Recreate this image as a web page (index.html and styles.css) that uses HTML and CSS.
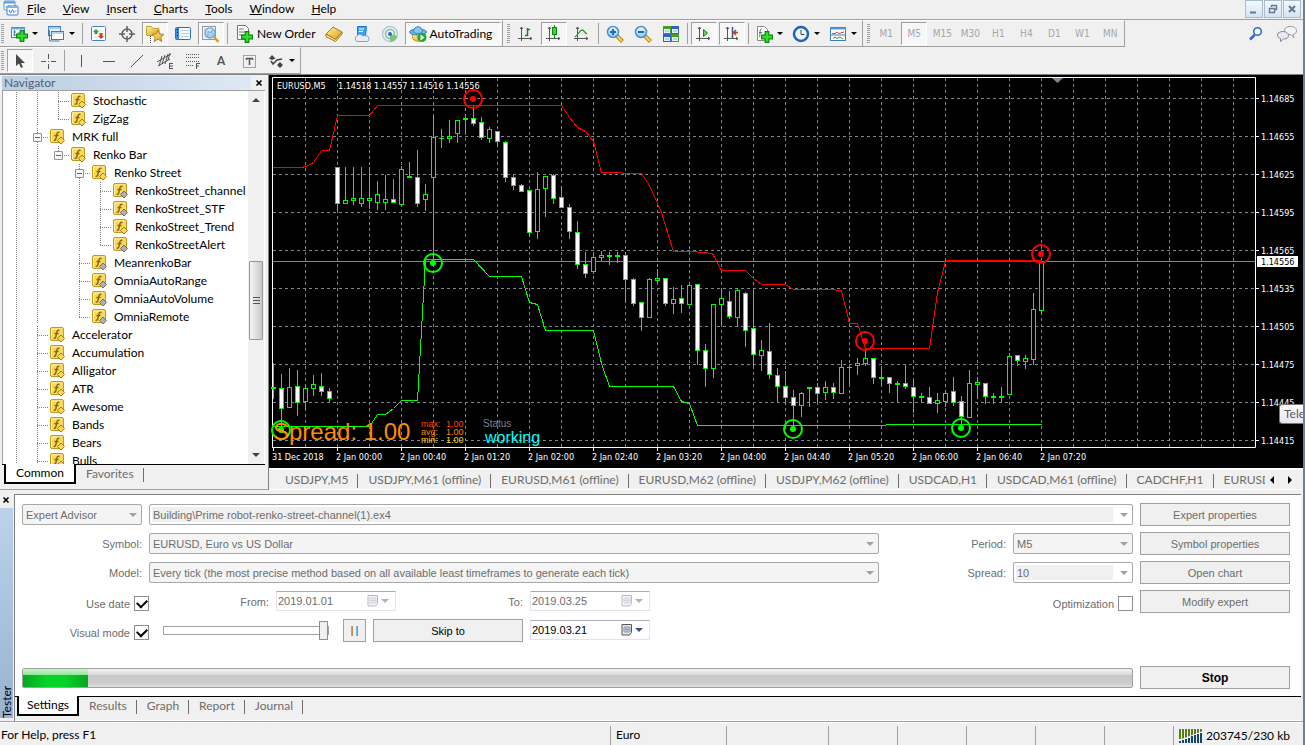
FILE: index.html
```html
<!DOCTYPE html>
<html lang="en">
<head>
    <meta charset="UTF-8">
    <meta name="viewport" content="width=device-width, initial-scale=1.0">
    <title>EURUSD,M5 - Strategy Tester</title>
    <link rel="stylesheet" href="styles.css">
</head>
<body>
    <svg width="0" height="0" class="defs">
        <defs>
            <linearGradient id="gold" x1="0" y1="0" x2="1" y2="1"><stop offset="0" stop-color="#fff3a0"/><stop offset="1" stop-color="#d99a10"/></linearGradient>
            <linearGradient id="lens" x1="0" y1="0" x2="0" y2="1"><stop offset="0" stop-color="#f2faff"/><stop offset="1" stop-color="#8cc4ee"/></linearGradient>
            <symbol id="axes" viewBox="0 0 18 18"><path d="M4.500 2v14M1 13.500h14M3 4l1.500-2 1.500 2M13 12l2 1.500-2 1.500" fill="none" stroke="#555"/></symbol>
            <symbol id="plus" viewBox="0 0 10 10"><path d="M3.500.500h3v3h3v3h-3v3h-3v-3h-3v-3h3z" fill="#2fe02f" stroke="#0a8a0a"/></symbol>
            <symbol id="func" viewBox="0 0 16 16">
                <rect x=".5" y=".5" width="13" height="13" rx="1.500" fill="#f5d95c" stroke="#c49a1c"/>
                <path d="M1.500 12V2h10" fill="none" stroke="#fdf0a8"/>
                <path d="M9.500 3.500c-2-.8-2.500.5-3 3l-.6 3c-.3 1.500-1 2-2.200 1.500M4.500 6.500h4" fill="none" stroke="#8a6410" stroke-width="1.400"/>
                <path d="M11 8l3.500 3.500L11 15l-3.500-3.500z" fill="var(--dot)" stroke="var(--dot-edge)"/>
            </symbol>
            <symbol id="calendar" viewBox="0 0 12 12"><path d="M1 .5h9.500v8l-2 2.500H1z" fill="#e4e8ee" stroke="#5a5257"/><path d="M3 3h6v5H3zM3 5.500h6M5 3v5M7 3v5" fill="none" stroke="#8d9bb0"/></symbol>
        </defs>
    </svg>

    <header class="menubar">
        <svg class="logo" width="16" height="16" viewBox="0 0 16 16"><rect x="1" y="1" width="11" height="9" rx="1" fill="#fff" stroke="#5b9bd8"/><path d="M1 2.500h11" stroke="#5b9bd8" stroke-width="2"/><path d="M2.500 6l1.500 2 1.500-3" fill="none" stroke="#5b9bd8"/><rect x="4" y="6" width="11" height="9" rx="1" fill="#fff" stroke="#3f7fd0"/><path d="M4 7h11" stroke="#7db4e8" stroke-width="2"/><path d="M6 10l1.500 3 2-3.500 1.500 3 2-2" fill="none" stroke="#3f7fd0"/></svg>
        <nav class="menu">
            <button><u>F</u>ile</button>
            <button><u>V</u>iew</button>
            <button><u>I</u>nsert</button>
            <button><u>C</u>harts</button>
            <button><u>T</u>ools</button>
            <button><u>W</u>indow</button>
            <button><u>H</u>elp</button>
        </nav>
        <div class="win-buttons">
            <button aria-label="Minimize"><svg width="16" height="16"><path d="M4 11.500h6" stroke="#66788c" stroke-width="2"/></svg></button>
            <button aria-label="Restore"><svg width="16" height="16"><path d="M6.500 6V4.500h5v4H10M6 4.500h6M4.500 7.500h5v4h-5zM4 7.500h6" fill="none" stroke="#66788c" stroke-width="1.400"/></svg></button>
            <button aria-label="Close"><svg width="16" height="16"><path d="M5 5l6 6M11 5l-6 6" stroke="#66788c" stroke-width="2.200"/></svg></button>
        </div>
    </header>

    <div class="toolrow">
        <div class="toolbar">
            <i class="grip"></i>
            <button class="tool drop" aria-label="New chart"><svg width="18" height="18"><rect x="1.500" y="2.500" width="13" height="10" fill="#fff" stroke="#3d7cb8"/><path d="M1 3.500h14" stroke="#6ba7dc" stroke-width="2"/><path d="M4.500 5v6M3 7h3M3 10h3M7.500 8h3" stroke="#4a7fb5" fill="none"/><use href="#plus" x="6" y="5" width="12" height="12"/></svg></button>
            <button class="tool drop" aria-label="Profiles"><svg width="18" height="18"><rect x="1.500" y="1.500" width="12" height="9" fill="#e9f3fc" stroke="#3d7cb8"/><path d="M1 3h13" stroke="#6ba7dc"/><rect x="4.500" y="6.500" width="12" height="8" fill="#fff" stroke="#3d7cb8"/><path d="M4 8h13" stroke="#6ba7dc"/><path d="M2.500 5v11h10" fill="none" stroke="#4a7fb5"/></svg></button>
            <i class="sep"></i>
            <button class="tool" aria-label="Market Watch"><svg width="18" height="18"><rect x="1.500" y="1.500" width="14" height="14" rx="1" fill="#fff" stroke="#3d85c6"/><path d="M3 6h11M3 9h11M3 12h11" stroke="#dde7ee"/><path d="M6 4l3 3H7.500v2h-3V7H3z" fill="#27a52b"/><path d="M11 14l-3-3h1.500V8h3v3H14z" fill="#e03c14"/></svg></button>
            <button class="tool" aria-label="Data Window"><svg width="18" height="18"><circle cx="9" cy="9" r="5" fill="none" stroke="#606060" stroke-width="1.500"/><path d="M9 1v6M9 11v6M1 9h6M11 9h6" stroke="#606060" stroke-width="1.500"/></svg></button>
            <button class="tool pressed" aria-label="Navigator"><svg width="20" height="18"><path d="M1.500 10.500v-9h5l1.500 2h6v7z" fill="url(#gold)" stroke="#c9a227"/><path d="M5.500 11v7" stroke="#444" stroke-dasharray="1 1"/><path d="M13 5l1.800 4 4.200.4-3.200 2.800 1 4.300-3.800-2.300-3.800 2.300 1-4.300L7 9.400l4.200-.4z" fill="url(#gold)" stroke="#b88514"/></svg></button>
            <button class="tool" aria-label="Terminal"><svg width="18" height="18"><rect x="1.500" y="2.500" width="15" height="12" rx="1" fill="#f4faff" stroke="#2d6db3"/><rect x="2" y="3" width="3" height="11" fill="#3d8be0"/><path d="M3.500 4v9" stroke="#111" stroke-dasharray="1 2"/><path d="M7 5.500h8M7 8.500h8M7 11.500h8" stroke="#b8cde6"/></svg></button>
            <button class="tool pressed" aria-label="Strategy Tester"><svg width="20" height="18"><rect x="1.500" y="1.500" width="13" height="13" fill="#f7f7f7" stroke="#999"/><path d="M4 3v10M8 3v10M12 3v10" stroke="#c4cbd2"/><circle cx="9" cy="8" r="5" fill="url(#lens)" stroke="#6fa8dc" stroke-width="1.500"/><path d="M7 11V6l2 2 2-3v5" stroke="#7fa8cf" fill="none"/><path d="M13 12l4.500 5" stroke="#d5a021" stroke-width="2.500"/></svg></button>
            <i class="sep"></i>
            <button class="tool wide order"><svg width="18" height="20"><path d="M1.500 1.500h8l3 3v11h-11z" fill="#fff" stroke="#777"/><path d="M3 5h5M3 8h7M3 11h5" stroke="#777"/><use href="#plus" x="5" y="7" width="12" height="12"/></svg>New Order</button>
            <button class="tool" aria-label="Library"><svg width="18" height="18"><path d="M1 9l7-7 9 5-6 8z" fill="url(#gold)" stroke="#b07d10"/><path d="M1 9v2.500l9.500 5L17 9V7l-6.500 7.500z" fill="#fff0c0" stroke="#a87008"/></svg></button>
            <button class="tool" aria-label="MetaEditor"><svg width="18" height="18"><path d="M4.500 1.500h9l-1 9h-8z" fill="#3ba3f0" stroke="#1c7bd0"/><path d="M6 4h5M6 6.500h4" stroke="#fff"/><path d="M4 16.500a3 3 0 0 1 0-5.500c2-3 5-1 6 0 3-1 6 0 6 2.500s-1 3-3 3z" fill="#e8eef8" stroke="#8a9cc0"/></svg></button>
            <button class="tool" aria-label="Signals"><svg width="18" height="18"><circle cx="9" cy="9" r="7.500" fill="#e8f0f4" stroke="#b4c9dc" stroke-width="1.500"/><circle cx="9" cy="9" r="4.500" fill="none" stroke="#8fbaa6" stroke-width="1.500"/><path d="M9 9v8c4 0 7-3 7-6" fill="#7cc47c"/><circle cx="9" cy="9" r="2" fill="#2a6fb8"/></svg></button>
            <button class="tool wide pressed"><svg width="18" height="18"><path d="M3 9l1 5c2 3 8 3 11 0l1-5z" fill="url(#gold)" stroke="#c49420"/><ellipse cx="9" cy="7" rx="8.500" ry="3" fill="#6db5e4" stroke="#3b86bd"/><path d="M4.500 7c0-7 9-7 9 0-3 2-6 2-9 0z" fill="#83c6ee" stroke="#3b86bd"/><circle cx="13" cy="12.500" r="4.500" fill="#1fa82b"/><path d="M11.500 9.500v6l4-3z" fill="#fff"/></svg>AutoTrading</button>
        </div>
        <div class="toolbar">
            <i class="grip"></i>
            <button class="tool" aria-label="Bar chart"><svg width="18" height="18"><use href="#axes" width="18" height="18"/><path d="M10.500 3v8M8 10.500h2.500M10.500 4.500H13" stroke="#118a11" stroke-width="1.500" fill="none"/></svg></button>
            <button class="tool pressed" aria-label="Candlesticks"><svg width="18" height="18"><use href="#axes" width="18" height="18"/><path d="M9.500 0v13" stroke="#0a8a0a"/><rect x="7.500" y="2.500" width="4" height="7" fill="#2ee02e" stroke="#0a8a0a"/></svg></button>
            <button class="tool" aria-label="Line chart"><svg width="18" height="18"><use href="#axes" width="18" height="18"/><path d="M2 12c4-3 5-7 7-7s3 3 5 4" stroke="#2a9a3a" fill="none" stroke-width="1.300"/></svg></button>
            <i class="sep"></i>
            <button class="tool" aria-label="Zoom in"><svg width="18" height="18"><path d="M10.500 10.500l6 6" stroke="#b88514" stroke-width="4"/><path d="M11 11l5 5" stroke="#f6d95a" stroke-width="2"/><circle cx="7" cy="7" r="5.500" fill="url(#lens)" stroke="#4a90d0" stroke-width="1.500"/><path d="M4 7h6M7 4v6" stroke="#1f6cb0" stroke-width="2"/></svg></button>
            <button class="tool" aria-label="Zoom out"><svg width="18" height="18"><path d="M10.500 10.500l6 6" stroke="#b88514" stroke-width="4"/><path d="M11 11l5 5" stroke="#f6d95a" stroke-width="2"/><circle cx="7" cy="7" r="5.500" fill="url(#lens)" stroke="#4a90d0" stroke-width="1.500"/><path d="M4 7h6" stroke="#1f6cb0" stroke-width="2"/></svg></button>
            <button class="tool" aria-label="Tile windows"><svg width="18" height="18"><path d="M1 1h8v8H1zM9 9h8v8H9z" fill="#45a02a"/><path d="M9 1h8v8H9zM1 9h8v8H1z" fill="#2d63c8"/><path d="M2 4h6v4H2zM10 4h6v4h-6zM2 12h6v4H2zM10 12h6v4h-6z" fill="#e6f0fa"/><path d="M3 6h4M11 6h4M3 14h4M11 14h4" stroke="#9fb8a8"/></svg></button>
            <i class="sep"></i>
            <button class="tool pressed" aria-label="Auto scroll"><svg width="18" height="18"><use href="#axes" width="18" height="18"/><path d="M8.500 4.500v7l4-3.500z" fill="#5fd65f" stroke="#0a8a0a"/></svg></button>
            <button class="tool pressed" aria-label="Chart shift"><svg width="18" height="18"><use href="#axes" width="18" height="18"/><path d="M9.500 2v11" stroke="#1f5fa0" stroke-width="1.500"/><path d="M10 7.500h5M13 5l-2.500 2.500L13 10" stroke="#c03a10" fill="none" stroke-width="1.500"/></svg></button>
            <i class="sep"></i>
            <button class="tool drop" aria-label="Indicators"><svg width="18" height="18"><path d="M2.500 1.500h7l3 3v11h-10z" fill="#fff" stroke="#888"/><path d="M6.500 4c-2 0-1 4-2 8M4 7.500h3" fill="none" stroke="#666"/><use href="#plus" x="6" y="6" width="12" height="12"/></svg></button>
            <button class="tool drop" aria-label="Periods"><svg width="18" height="18"><circle cx="9" cy="9" r="7" fill="#eef6fd" stroke="#1e66b4" stroke-width="2.500"/><path d="M9 5v4.500h3.500" stroke="#444" fill="none"/></svg></button>
            <button class="tool drop" aria-label="Templates"><svg width="18" height="18"><rect x="1.500" y="2.500" width="15" height="13" fill="#fff" stroke="#3d7cb8"/><path d="M1 3.500h16" stroke="#4e9be0" stroke-width="2"/><path d="M3 8.500h3l2-1.500 2 1.500 5-1.500" stroke="#c0503a" fill="none"/><path d="M1 10h16" stroke="#3d7cb8"/><path d="M4 13.500l2-1.500 2 1.500 3-1.500 3 2" stroke="#2a9a3a" fill="none"/></svg></button>
        </div>
        <div class="toolbar periods">
            <i class="grip"></i>
            <button class="tool" disabled>M1</button>
            <button class="tool pressed" disabled>M5</button>
            <button class="tool" disabled>M15</button>
            <button class="tool" disabled>M30</button>
            <button class="tool" disabled>H1</button>
            <button class="tool" disabled>H4</button>
            <button class="tool" disabled>D1</button>
            <button class="tool" disabled>W1</button>
            <button class="tool" disabled>MN</button>
        </div>
        <div class="corner">
            <button aria-label="Search"><svg width="16" height="16"><path d="M6.500 9L2 13.500" stroke="#2f66d8" stroke-width="2.500"/><circle cx="9.500" cy="5.500" r="3.800" fill="#fff" stroke="#2f66d8" stroke-width="1.600"/></svg></button>
            <button aria-label="Chat"><svg width="22" height="18"><path d="M14 1.500c4 0 6.500 1.500 6.500 4s-1.500 3.500-3.500 4l1 3-3.500-3C10 9.500 8.500 8 8.500 5.500s2-4 5.500-4z" fill="#f4f4f4" stroke="#999"/><path d="M7 6.500c3 0 5.500 1.500 5.500 4s-2 3.500-5 3.500l-3 2.500v-3c-2-.5-3-1.500-3-3.500S4 6.500 7 6.500z" fill="#e8e8f2" stroke="#888"/></svg></button>
        </div>
    </div>

    <div class="toolrow">
        <div class="toolbar">
            <i class="grip"></i>
            <button class="tool pressed" aria-label="Cursor"><svg width="18" height="18"><path d="M5 2v12l3-2.500 2 4.500 2-1-2-4h4z" fill="#4a4a4a"/></svg></button>
            <button class="tool" aria-label="Crosshair"><svg width="18" height="18"><path d="M9.500 2v5M9.500 12v5M2 9.500h5M12 9.500h5M9 9.500h1" stroke="#555"/></svg></button>
            <i class="sep"></i>
            <button class="tool" aria-label="Vertical line"><svg width="18" height="18"><path d="M9.500 3v12" stroke="#555"/></svg></button>
            <button class="tool" aria-label="Horizontal line"><svg width="18" height="18"><path d="M3 9.500h12" stroke="#555"/></svg></button>
            <button class="tool" aria-label="Trendline"><svg width="18" height="18"><path d="M3 15L15 3" stroke="#555"/></svg></button>
            <button class="tool" aria-label="Equidistant channel"><svg width="18" height="18"><path d="M1 10L15 2M2 14l12-7M6 4L3 14M9 3L6 12M12 2L9 12M14 1l-2 7M13.500 11v6M17 11.500h-3.500M17 14h-3.500M17 16.500h-3.500" stroke="#555" fill="none"/></svg></button>
            <button class="tool" aria-label="Fibonacci"><svg width="18" height="18"><path d="M2 2.500h13M2 5.500h13M2 9.500h13M2 13.500h8" stroke="#555" stroke-dasharray="1 1"/><path d="M12.500 17v-5.500H16M12.500 14H15" stroke="#555" fill="none"/></svg></button>
            <button class="tool glyph">A</button>
            <button class="tool" aria-label="Text label"><svg width="18" height="18"><rect x="3.500" y="3.500" width="12" height="12" fill="none" stroke="#555" stroke-dasharray="1 1"/><path d="M6 6.500h7M9.500 6v7M6.500 6v2M12.500 6v2" stroke="#555" stroke-width="1.500"/></svg></button>
            <button class="tool drop" aria-label="Arrows"><svg width="18" height="18"><path d="M5 3l3.500 3.500L5 8 2 6.500zM13 10l3 3-3 3-3-3z" fill="#444"/><path d="M4 9l2 3 4-4 5-1" stroke="#444" fill="none" stroke-width="1.500"/></svg></button>
        </div>
    </div>

    <main class="workspace">
        <section class="navigator">
            <div class="nav-title"><h2>Navigator</h2><button aria-label="Close navigator"><svg width="8" height="8"><path d="M1.500 1.500l5 5M6.500 1.500l-5 5" stroke="#000" stroke-width="1.600"/></svg></button></div>
            <div class="tree-box">
                <ul class="tree" id="tree"></ul>
                <div class="scrollbar">
                    <i class="arrow up"></i>
                    <div class="track"><div class="thumb"><i></i><i></i><i></i></div></div>
                    <i class="arrow down"></i>
                </div>
            </div>
            <div class="tabs">
                <button class="tab active">Common</button>
                <button class="tab">Favorites</button>
            </div>
        </section>

        <section class="charts">
            <svg class="chart" id="chart"></svg>
            <div class="chart-tabs">
                <div class="tab-list">
                    <button class="tab">USDJPY,M5</button>
                    <button class="tab">USDJPY,M61 (offline)</button>
                    <button class="tab">EURUSD,M61 (offline)</button>
                    <button class="tab">EURUSD,M62 (offline)</button>
                    <button class="tab">USDJPY,M62 (offline)</button>
                    <button class="tab">USDCAD,H1</button>
                    <button class="tab">USDCAD,M61 (offline)</button>
                    <button class="tab">CADCHF,H1</button>
                    <button class="tab">EURUSD,</button>
                </div>
                <button class="scroll" aria-label="Scroll left"><svg width="6" height="8"><path d="M5 0v8L1 4z"/></svg></button>
                <button class="scroll" aria-label="Scroll right"><svg width="6" height="8"><path d="M1 0v8l4-4z"/></svg></button>
            </div>
            <div class="tooltip">Tele</div>
        </section>
    </main>

    <section class="tester">
        <div class="tester-side">
            <button aria-label="Close tester"><svg width="8" height="8"><path d="M1.500 1.500l5 5M6.500 1.500l-5 5" stroke="#000" stroke-width="1.600"/></svg></button>
            <h2>Tester</h2>
        </div>
        <div class="tester-body">
            <form class="settings">
                <div class="first"><span class="select"><select aria-label="Program type" disabled><option>Expert Advisor</option></select></span></div>
                <div class="line"><span class="combo"><input type="text" aria-label="Expert" value="Building\Prime robot-renko-street-channel(1).ex4" disabled></span></div>
                <button type="button" class="btn" disabled>Expert properties</button>

                <label class="first" for="symbol">Symbol:</label>
                <div class="line">
                    <span class="select"><select id="symbol" disabled><option>EURUSD, Euro vs US Dollar</option></select></span>
                    <label class="side" for="period">Period:</label>
                    <span class="select short"><select id="period" disabled><option>M5</option></select></span>
                </div>
                <button type="button" class="btn" disabled>Symbol properties</button>

                <label class="first" for="model">Model:</label>
                <div class="line">
                    <span class="select"><select id="model" disabled><option>Every tick (the most precise method based on all available least timeframes to generate each tick)</option></select></span>
                    <label class="side" for="spread">Spread:</label>
                    <span class="combo short"><input type="text" id="spread" value="10" disabled></span>
                </div>
                <button type="button" class="btn" disabled>Open chart</button>

                <label class="check">Use date <input type="checkbox" checked></label>
                <div class="line">
                    <label class="from" for="from">From:</label>
                    <span class="date off"><input type="text" id="from" value="2019.01.01" disabled><svg width="12" height="12"><use href="#calendar"/></svg></span>
                    <label class="to" for="to">To:</label>
                    <span class="date off"><input type="text" id="to" value="2019.03.25" disabled><svg width="12" height="12"><use href="#calendar"/></svg></span>
                    <label class="check end">Optimization <input type="checkbox"></label>
                </div>
                <button type="button" class="btn" disabled>Modify expert</button>

                <label class="check">Visual mode <input type="checkbox" checked></label>
                <div class="line visual">
                    <input type="range" class="speed" aria-label="Speed" min="1" max="32" value="32">
                    <button type="button" class="btn pause" aria-label="Pause"><i></i><i></i></button>
                    <button type="button" class="btn skip">Skip to</button>
                    <span class="date"><input type="text" aria-label="Skip to date" value="2019.03.21"><svg width="12" height="12"><use href="#calendar"/></svg></span>
                </div>
            </form>
            <div class="run">
                <div class="progress" role="progressbar" aria-valuenow="5.9"><div class="bar" style="width: 5.9%"></div></div>
                <button class="btn stop">Stop</button>
            </div>
            <div class="tabs">
                <button class="tab active">Settings</button>
                <button class="tab">Results</button>
                <button class="tab">Graph</button>
                <button class="tab">Report</button>
                <button class="tab">Journal</button>
            </div>
        </div>
    </section>

    <footer class="status">
        <span class="help">For Help, press F1</span>
        <span class="profile">Euro</span>
        <span class="time"></span>
        <span></span>
        <span></span>
        <span></span>
        <span></span>
        <span></span>
        <span class="traffic"><svg width="24" height="14"><path d="M0 5h24" stroke="#5b7a1a" stroke-width="10" stroke-dasharray="2 1"/><path d="M0 14V11L24 2v12z" fill="#f0f0f0"/><path d="M0 12h2v2H0zM3 11h2v3H3zM6 10h2v4H6zM9 9h2v5H9zM12 7h2v7h-2zM15 6h2v8h-2zM18 5h2v9h-2zM21 4h2v10h-2z" fill="#12466b"/></svg>203745/230 kb</span>
    </footer>

    <script src="script.js"></script>
</body>
</html>
```
FILE: styles.css
```css
* {
    box-sizing: border-box;
}

body {
    margin: 0;
    background-color: #f0f0f0;
    border-right: 2px solid #6e7f94;
    color: #000;
    font-family: Lato, "Noto Sans", sans-serif;
    font-size: 12px;
    line-height: 16px;
    overflow: hidden;
}

button, input, select {
    font: inherit;
    color: inherit;
    margin: 0;
    padding: 0;
    border: 0;
    background: none;
}

svg {
    display: block;
    flex: none;
}

.defs {
    position: absolute;
}

h2 {
    margin: 0;
    font-size: 12px;
    font-weight: normal;
}

/* Menu */
.menubar {
    display: flex;
    height: 20px;
    padding-left: 3px;
    border-bottom: 1px solid #a0a0a0;
}

.menu {
    display: flex;
    gap: 17px;
    flex: 1;
    padding: 0 0 2px 8px;
}

.win-buttons {
    display: flex;
    gap: 1px;
    padding-right: 2px;
}

.win-buttons button {
    height: 18px;
    border: 1px solid #a9bccf;
    background: linear-gradient(#f4f9fe, #d3e4f5);
}

/* Toolbars */
.toolrow {
    display: flex;
    height: 27px;
}

.toolbar {
    display: flex;
    align-items: center;
    padding-left: 1px;
    border-top: 1px solid #fff;
    border-right: 1px solid #a0a0a0;
    border-bottom: 1px solid #a0a0a0;
}

.toolbar + .toolbar {
    padding-left: 4px;
}

.grip {
    width: 3px;
    height: 19px;
    margin-right: 2px;
    background: repeating-linear-gradient(#a0a0a0 0 1px, #f0f0f0 1px 2px);
}

.sep {
    width: 1px;
    height: 21px;
    margin: 0 2px;
    background-color: #a0a0a0;
}

.tool {
    display: flex;
    align-items: center;
    justify-content: center;
    width: 26px;
    height: 23px;
    margin: 0 1px;
}

.tool.pressed {
    border: 1px solid #a0a0a0;
    border-right-color: #fff;
    border-bottom-color: #fff;
    background-color: #f7f7f7;
}

.tool.wide {
    width: auto;
    gap: 3px;
    padding: 0 8px 0 3px;
}

.tool.order {
    padding: 0 3px 0 5px;
}

.tool.drop {
    width: 35px;
    gap: 4px;
    padding-right: 2px;
}

.tool.drop::after {
    content: "";
    border: 3px solid transparent;
    border-top-color: #000;
    border-bottom: 0;
}

.tool.glyph {
    color: #555;
    font-family: Roboto, sans-serif;
    font-weight: 500;
    font-size: 13px;
}

.periods .tool {
    color: #a6a6a6;
    font-family: "DejaVu Sans Condensed", sans-serif;
    font-size: 10px;
}

.corner {
    display: flex;
    align-items: center;
    gap: 12px;
    margin-left: auto;
    padding-right: 5px;
}

/* Navigator */
.workspace {
    display: flex;
    height: 416px;
    border-top: 1px solid #808080;
}

.navigator {
    display: flex;
    flex-direction: column;
    width: 269px;
    padding: 0 3px 0 2px;
    border-right: 1px solid #808080;
    border-bottom: 1px solid #a0a0a0;
}

.nav-title {
    display: flex;
    align-items: center;
    justify-content: space-between;
    height: 15px;
    padding-right: 2px;
}

.nav-title h2 {
    flex: 1;
    margin-right: 4px;
    padding-left: 2px;
    background: linear-gradient(90deg, #bacde2, #dfe9f5);
    color: #4d5e74;
    line-height: 14px;
}

.tree-box {
    display: flex;
    height: 374px;
    border-top: 1px solid #a0a0a0;
    border-left: 1px solid #a0a0a0;
    background-color: #fff;
    overflow: hidden;
}

.tree {
    flex: 1;
    min-width: 0;
    margin: 0;
    padding: 1px 0 0 3px;
    list-style: none;
}

.tree li {
    display: flex;
    align-items: center;
    height: 18px;
    white-space: nowrap;
}

.tree svg {
    --dot: #f5d95c;
    --dot-edge: #a87a10;
    margin: 0 7px 0 2px;
}

.tree svg.plain {
    --dot: #b0b0b0;
    --dot-edge: #707070;
}

.guide {
    position: relative;
    width: 21px;
    height: 18px;
}

.guide::before {
    content: "";
    position: absolute;
    left: 10px;
    top: 0;
    width: 1px;
    height: 18px;
    background: repeating-linear-gradient(#808080 0 1px, transparent 1px 2px);
}

.guide::after {
    content: "";
    position: absolute;
    left: 10px;
    top: 9px;
    width: 11px;
    height: 1px;
    background: repeating-linear-gradient(90deg, #808080 0 1px, transparent 1px 2px);
}

.guide.none::before, .guide.none::after, .guide.line::after {
    display: none;
}

.guide.last::before {
    height: 9px;
}

.box {
    position: absolute;
    z-index: 1;
    left: 6px;
    top: 5px;
    width: 9px;
    height: 9px;
    border: 1px solid #919191;
    border-radius: 1px;
    background: linear-gradient(#4b63a7, #4b63a7) center / 5px 1px no-repeat #f6f6f6;
}

.scrollbar {
    display: flex;
    flex: none;
    flex-direction: column;
    align-items: center;
    width: 16px;
    margin-right: 1px;
    background-color: #f0f0f0;
}

.arrow {
    margin: 7px 0;
    border: 4px solid transparent;
}

.arrow.up {
    border-top: 0;
    border-bottom-color: #444;
}

.arrow.down {
    border-bottom: 0;
    border-top-color: #444;
}

.track {
    flex: 1;
    width: 14px;
    padding-top: 152px;
}

.thumb {
    display: flex;
    flex-direction: column;
    align-items: center;
    justify-content: center;
    gap: 2px;
    height: 79px;
    border: 1px solid #979797;
    border-radius: 1px;
    background: linear-gradient(90deg, #f5f5f5, #c9c9cd);
}

.thumb i {
    width: 7px;
    height: 1px;
    background-color: #555;
}

/* Tabs */
.tabs {
    display: flex;
    align-items: flex-start;
    height: 24px;
    padding-left: 2px;
    border-top: 1px solid #000;
}

.tab {
    position: relative;
    padding: 1px 10px;
    color: #6d6d6d;
    white-space: nowrap;
}

.tab:not(.active)::after {
    content: "";
    position: absolute;
    right: 0;
    top: 3px;
    width: 1px;
    height: 14px;
    background-color: #6d6d6d;
}

.tab.active {
    height: 20px;
    margin-top: -1px;
    padding: 0 8px;
    border: solid #000;
    border-width: 0 2px 2px;
    background-color: #fff;
    color: #000;
}

.navigator .tab.active {
    padding: 0 10px;
}

/* Chart */
.charts {
    position: relative;
    flex: 1;
    min-width: 0;
    padding: 1px 2px 0 1px;
    background-color: #000;
}

.chart {
    width: 100%;
    height: 392px;
    font-family: "DejaVu Sans Condensed", sans-serif;
    font-size: 9px;
}

.chart text {
    fill: #fff;
}

.chart .hud {
    font-family: "Liberation Sans", Arial, sans-serif;
}

.chart-tabs {
    display: flex;
    align-items: center;
    height: 22px;
    margin: 0 -2px 0 -1px;
    padding: 0 2px 0 6px;
    border-top: 2px solid #fff;
    border-bottom: 1px solid #fff;
    background-color: #f0f0f0;
}

.tab-list {
    display: flex;
    flex: 1;
    overflow: hidden;
}

.scroll {
    width: 18px;
    padding-left: 4px;
}

.tooltip {
    position: absolute;
    top: 329px;
    right: -2px;
    width: 26px;
    height: 20px;
    padding: 1px 0 1px 4px;
    border: 1px solid #767676;
    border-right: 0;
    border-radius: 3px 0 0 3px;
    background: linear-gradient(#fff, #e4e5f0);
    color: #575757;
}

/* Tester */
.tester {
    display: flex;
    height: 232px;
    padding-top: 4px;
    border-bottom: 1px solid #a0a0a0;
}

.tester-side {
    display: flex;
    flex-direction: column;
    width: 14px;
    padding: 2px 1px 3px 0;
}

.tester-side button {
    padding: 0 0 4px 2px;
}

.tester-side h2 {
    flex: 1;
    background: linear-gradient(#98b2d0, #bcd2ec);
    line-height: 13px;
    writing-mode: vertical-rl;
    transform: rotate(180deg);
}

.tester-body {
    flex: 1;
    min-width: 0;
    margin-right: 2px;
    border-top: 1px solid #808080;
    border-left: 1px solid #808080;
    background-color: #fff;
    color: #6d6d6d;
    font-family: "Liberation Sans", Arial, sans-serif;
    font-size: 11px;
}

.tester-body .tabs {
    background-color: #f0f0f0;
    font-family: Lato, "Noto Sans", sans-serif;
    font-size: 12px;
}

.settings {
    display: grid;
    grid-template-columns: 127px 1fr 150px;
    row-gap: 6px;
    padding: 8px 11px 0 7px;
}

.settings .first, .line, .check {
    display: flex;
    align-items: center;
    height: 23px;
}

.settings .first {
    justify-content: flex-end;
    padding-right: 7px;
}

.line {
    padding-right: 7px;
}

.settings .check {
    justify-content: flex-end;
    gap: 4px;
    padding-top: 4px;
    white-space: nowrap;
}

.check.end {
    margin-left: auto;
}

.check input {
    appearance: none;
    display: grid;
    place-items: center;
    width: 15px;
    height: 15px;
    border: 1px solid #8e8f8f;
    background-color: #fff;
}

.check input:checked::before {
    content: "";
    width: 8px;
    height: 5px;
    margin-bottom: 3px;
    border: solid #000;
    border-width: 0 0 2px 2px;
    transform: rotate(-45deg);
}

.select, .combo {
    display: flex;
    position: relative;
    flex: 1;
    align-items: center;
    height: 21px;
    border: 1px solid #a8a8a8;
    border-radius: 2px;
    background-color: #f4f4f4;
}

.select::after, .combo::after {
    content: "";
    position: absolute;
    right: 4px;
    border: 4px solid transparent;
    border-top-color: #a0a0a0;
    border-bottom: 0;
}

.select select {
    appearance: none;
    width: 100%;
    padding: 0 3px;
    opacity: 1;
}

.combo {
    padding: 2px 19px 2px 2px;
    background-color: #fff;
}

.combo input {
    width: 100%;
    height: 15px;
    padding: 0 1px;
    background-color: #f0f0f0;
}

.settings .short {
    flex: none;
    width: 120px;
}

.side {
    width: 134px;
    padding-right: 7px;
    text-align: right;
}

.from, .to {
    width: 127px;
    padding-right: 7px;
    text-align: right;
}

.to {
    width: 134px;
}

.date {
    display: flex;
    align-items: center;
    width: 120px;
    height: 20px;
    margin-bottom: 2px;
    padding-right: 6px;
    border: 1px solid #e2e3ea;
    border-top-color: #abadb3;
    border-radius: 1px;
    color: #000;
}

.date input {
    flex: 1;
    min-width: 0;
    padding: 0 1px;
}

.date::after {
    content: "";
    margin-left: 2px;
    border: 4px solid transparent;
    border-top-color: #3b5488;
    border-bottom: 0;
}

.date.off {
    color: #6d6d6d;
}

.date.off svg {
    opacity: 0.4;
}

.date.off::after {
    border-top-color: #b4b4b4;
}

.btn {
    height: 23px;
    border: 1px solid #a0a0a0;
    background-color: #f0f0f0;
}

.visual {
    gap: 7px;
    padding-left: 14px;
}

.speed {
    appearance: none;
    width: 166px;
    height: 19px;
    margin-right: 7px;
}

.speed::-webkit-slider-runnable-track {
    height: 9px;
    border: 1px solid #a0a0a0;
}

.speed::-webkit-slider-thumb {
    appearance: none;
    width: 9px;
    height: 19px;
    margin-top: -6px;
    border: 1px solid #909090;
    background-color: #f0f0f0;
}

.pause {
    display: flex;
    align-items: center;
    justify-content: center;
    gap: 3px;
    width: 23px;
}

.pause i {
    width: 2px;
    height: 10px;
    border-left: 1px solid #6fb4ee;
    background-color: #c98a4a;
}

.skip {
    width: 150px;
    color: #000;
}

.run {
    display: grid;
    grid-template-columns: 1fr 150px;
    gap: 7px;
    align-items: center;
    padding: 24px 11px 7px 7px;
}

.progress {
    height: 20px;
    border: 1px solid #a0a0a0;
    border-radius: 2px;
    background: linear-gradient(#f2f2f2 0, #dcdcdc 30%, #c8c8c8 35%, #cdcdcd 80%, #e0e0e0);
}

.bar {
    height: 18px;
    background:
        linear-gradient(#c9f5cd 0, #90e698 34%, transparent 35%),
        linear-gradient(90deg, #0aa524, #04d327 35%, #04d327 65%, #0aa524);
}

.stop {
    color: #000;
    font-size: 12px;
    font-weight: bold;
}

/* Status bar */
.status {
    display: flex;
    height: 23px;
    padding-top: 3px;
    border-top: 1px solid #fff;
}

.status span {
    width: 69px;
    height: 19px;
    padding-left: 5px;
    border-left: 1px solid #a0a0a0;
    line-height: 18px;
}

.status .help {
    flex: 1;
    padding-left: 1px;
    border-left: 0;
}

.status .profile {
    width: 116px;
}

.status .time {
    width: 102px;
}

.status .traffic {
    display: flex;
    align-items: center;
    gap: 3px;
    width: 130px;
}
```
FILE: script.js
```js
// Navigator tree: guides, name, plain marker
// v = line, t = branch, l = last branch, m / n = open folder (n is the last one)
const nodes = [
    ["vvt", "Stochastic"],
    ["vvl", "ZigZag"],
    ["vm", "MRK full"],
    ["vvn", "Renko Bar"],
    ["vv m", "Renko Street"],
    ["vv vt", "RenkoStreet_channel", true],
    ["vv vt", "RenkoStreet_STF", true],
    ["vv vt", "RenkoStreet_Trend"],
    ["vv vl", "RenkoStreetAlert", true],
    ["vv t", "MeanrenkoBar", true],
    ["vv t", "OmniaAutoRange", true],
    ["vv t", "OmniaAutoVolume", true],
    ["vv l", "OmniaRemote", true],
    ["vt", "Accelerator"],
    ["vt", "Accumulation"],
    ["vt", "Alligator"],
    ["vt", "ATR"],
    ["vt", "Awesome"],
    ["vt", "Bands"],
    ["vt", "Bears"],
    ["vt", "Bulls"]
];
const guideClass = { v: "line", t: "branch", l: "last", m: "branch", n: "last", " ": "none" };

document.getElementById("tree").innerHTML = nodes.map(([guides, name, plain]) => {
    const lines = [...guides].map(g =>
        `<span class="guide ${guideClass[g]}">${g === "m" || g === "n" ? '<i class="box"></i>' : ""}</span>`).join("");
    return `<li>${lines}<svg class="${plain ? "plain" : ""}" width="15" height="16" viewBox="0 0 15 16"><use href="#func" width="16" height="16"/></svg>${name}</li>`;
}).join("");

// Candles, one every 8px: high, body top, body bottom, low, 1 = falling
const candles = [
    [363,387,388,398,0],[374,388,408,425,1],[368,387,407,407,0],[370,386,402,415,1],[385,388,401,409,0],[375,384,388,395,0],[373,386,391,395,1],[388,391,398,401,1],
    [167,167,203,209,1],[167,200,203,203,0],[167,198,200,204,0],[167,198,203,206,0],[167,198,200,208,0],[181,194,202,209,0],[175,199,202,209,0],[179,199,202,202,1],
    [166,169,204,205,0],[162,176,177,177,0],[150,177,203,206,1],[184,194,199,210,0],[115,137,177,262,0],[129,138,138,147,0],[120,136,138,142,0],[120,120,133,142,0],
    [114,118,119,133,0],[106,118,123,125,1],[117,122,137,139,1],[127,129,138,142,0],[131,131,141,146,1],[141,142,177,181,1],[175,177,185,189,1],[184,185,191,191,1],
    [190,190,232,236,1],[172,189,231,238,0],[176,176,188,216,0],[174,175,198,203,1],[186,197,207,207,1],[204,207,231,238,1],[221,232,264,268,1],[252,264,273,277,1],
    [254,257,271,273,0],[251,255,257,260,0],[252,255,256,264,0],[252,255,256,262,0],[252,255,279,302,1],[278,279,303,305,1],[302,302,317,330,1],[278,279,317,317,0],
    [269,278,280,281,0],[278,278,303,305,1],[287,299,303,313,0],[285,298,303,312,1],[285,285,304,304,0],[284,284,350,364,1],[344,350,368,386,1],[304,304,368,377,0],
    [288,298,304,325,0],[291,301,316,318,1],[288,290,317,326,0],[292,293,330,346,1],[289,328,354,366,1],[340,350,355,370,0],[323,351,374,378,1],[368,375,386,402,1],
    [371,386,397,404,1],[390,397,405,427,1],[392,393,405,416,0],[387,387,388,406,0],[383,387,393,401,1],[381,387,392,399,0],[383,387,392,398,1],[360,367,393,393,0],
    [365,367,367,383,0],[358,363,365,374,0],[351,358,363,365,0],[358,358,377,383,1],[369,377,378,384,0],[377,377,383,392,1],[381,383,384,402,0],[365,383,386,388,1],
    [381,387,396,412,1],[393,396,397,402,0],[387,397,403,403,1],[393,400,403,412,0],[390,393,401,406,0],[377,391,402,405,1],[396,401,416,426,1],[370,383,417,417,0],
    [377,382,384,398,0],[383,383,396,403,1],[393,396,397,403,0],[387,396,397,402,0],[353,356,394,394,0],[355,355,360,365,1],[355,358,361,368,0],[293,309,359,364,0],
    [261,262,310,313,0]
];
const upper = "272,167 300,167 306,166 313,162 321,150 329,150 337,115 369,115 377,105 561,105 569,117 577,127 585,131 593,141 601,172 641,173 649,185 661,212 673,251 693,251 712,253 721,270 745,270 753,278 761,284 785,284 793,289 829,289 841,290 849,323 857,323 865,348 929,348 937,292 945,261 1041,261";
const lower = "272,426 369,426 377,414 385,414 393,408 401,400 417,400 425,259 473,259 489,276 521,276 529,302 537,304 545,330 593,330 601,363 609,386 673,386 681,401 689,403 697,425 885,425 886,424 1041,424";
const signals = [[473, 99, "red"], [865, 341, "red"], [1041, 254, "red"], [433, 263, "lime"], [793, 429, "lime"], [961, 428, "lime"], [281, 430, "lime"]];

function drawChart() {
    let out = "";
    // Grid
    for (let y = 98; y <= 440; y += 38) {
        out += `<path d="M273 ${y}.5H1255" stroke="#778899" stroke-dasharray="3 3"/>`;
        out += `<path d="M1255 ${y}.5h4" stroke="#fff"/>`;
        const price = (1.14685 - (y - 98) / 38 * 0.0003).toFixed(5);
        out += `<text x="1261" y="${y + 4}">${price}</text>`;
    }
    for (let x = 305; x < 1255; x += 32) {
        out += `<path d="M${x}.5 78V447" stroke="#778899" stroke-dasharray="3 3"/>`;
    }
    out += `<path d="M273 261.5H1255" stroke="#778899"/><path d="M1052 78h11l-5.500 5z" fill="#778899"/>`;
    out += `<path d="M272.5 447V77.500H1255.500V447.500H272" fill="none" stroke="#fff"/>`;

    // Time axis
    for (let i = 0; i < 13; i++) {
        const x = 273 + i * 64;
        const min = (i - 1) * 40;
        const time = i ? `2 Jan 0${Math.floor(min / 60)}:${String(min % 60).padStart(2, "0")}` : "31 Dec 2018";
        out += `<path d="M${x}.5 448v3" stroke="#fff"/><text x="${x - 1}" y="460">${time}</text>`;
    }

    // Candles
    candles.forEach(([high, top, bottom, low, falling], i) => {
        const x = 273 + i * 8;
        out += `<rect x="${x}" y="${high}" width="1" height="${low + 1 - high}" fill="#0f0"/>`;
        if (bottom - top < 2) {
            out += `<rect x="${x - 2}" y="${top}" width="5" height="${bottom - top + 1}" fill="#0f0"/>`;
        } else {
            out += `<rect x="${x - 1.5}" y="${top + 0.5}" width="4" height="${bottom - top}" fill="${falling ? "#fff" : "#000"}" stroke="#0f0"/>`;
        }
    });

    // Channel and signals
    out += `<g transform="translate(0.5 0.5)" fill="none" shape-rendering="crispEdges"><polyline points="${upper}" stroke="red"/><polyline points="${lower}" stroke="#0f0"/><path d="M945 260H1041" stroke="red"/></g>`;
    signals.forEach(([x, y, color]) => {
        out += `<circle cx="${x}" cy="${y}" r="9" fill="none" stroke="${color}" stroke-width="2"/><circle cx="${x}" cy="${y}" r="3" fill="${color}"/>`;
    });

    // Labels over the chart
    out += `<text x="277" y="89">EURUSD,M5</text><text x="338" y="89">1.14518 1.14557 1.14516 1.14556</text>`;
    out += `<rect x="1257" y="256" width="41" height="11" fill="#fff"/><text x="1261" y="265" style="fill: #000">1.14556</text>`;
    out += `<g class="hud"><text x="273" y="440" style="fill: #ff8c00; font-size: 24px">Spread: 1.00</text>`;
    [["max:", "#ff4500"], ["avg:", "#ff8c00"], ["min:", "#ffd700"]].forEach(([label, color], i) => {
        out += `<text x="421" y="${427 + i * 8}" style="fill: ${color}">${label}</text><text x="446" y="${427 + i * 8}" style="fill: ${color}">1.00</text>`;
    });
    out += `<text x="483" y="427" style="fill: #808080; font-size: 10px">Status</text><text x="485" y="443" style="fill: #00ffff; font-size: 16px">working</text></g>`;

    document.getElementById("chart").innerHTML = `<g transform="translate(-270 -76)">${out}</g>`;
}

drawChart();
```
